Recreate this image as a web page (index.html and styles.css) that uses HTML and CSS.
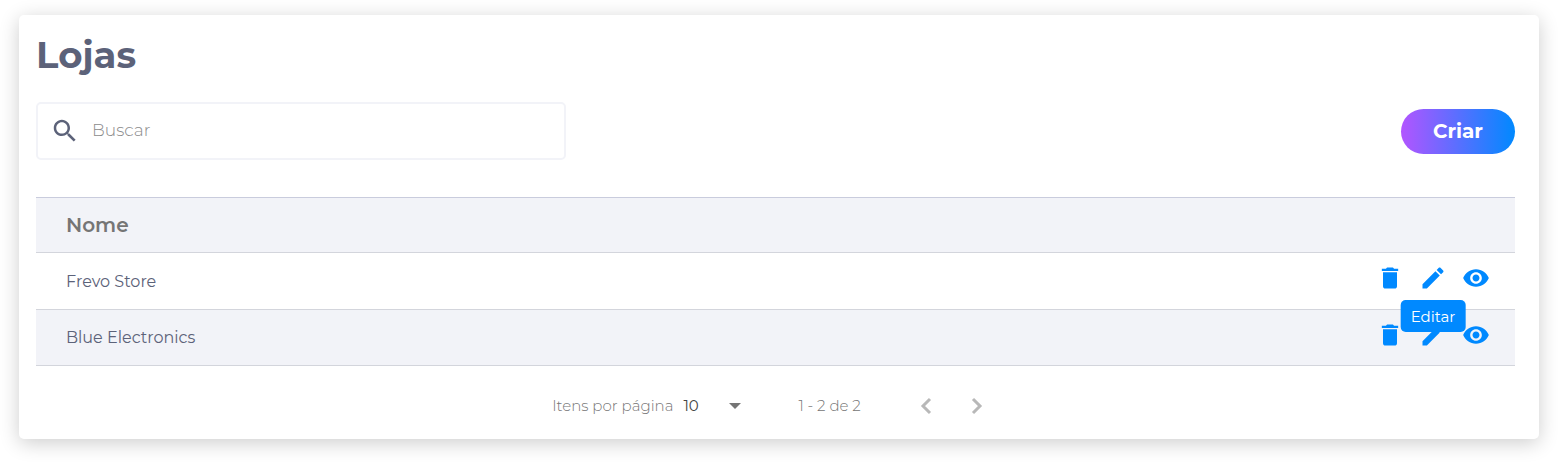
FILE: index.html
```html
<!DOCTYPE html>
<html lang="pt-BR">
<head>
<meta charset="utf-8">
<meta name="viewport" content="width=device-width, initial-scale=1">
<title>Lojas</title>
<link rel="stylesheet" href="styles.css">
</head>
<body>
<svg class="sprite" aria-hidden="true">
  <symbol id="trash" viewBox="0 0 24 24"><path d="M6 19c0 1.100.9 2 2 2h8c1.100 0 2-.9 2-2V7H6v12zM19 4h-3.500l-1-1h-5l-1 1H5v2h14V4z"/></symbol>
  <symbol id="pencil" viewBox="0 0 24 24"><path d="M3 17.250V21h3.750L17.810 9.940l-3.750-3.750L3 17.250zM20.710 7.040c.39-.39.39-1.020 0-1.410l-2.340-2.340c-.39-.39-1.020-.39-1.410 0l-1.830 1.830 3.750 3.750 1.830-1.830z"/></symbol>
  <symbol id="eye" viewBox="0 0 24 24"><path d="M12 4.500C7 4.500 2.730 7.610 1 12c1.730 4.390 6 7.500 11 7.500s9.270-3.110 11-7.500c-1.730-4.390-6-7.500-11-7.500zM12 17c-2.760 0-5-2.240-5-5s2.240-5 5-5 5 2.240 5 5-2.240 5-5 5zm0-8c-1.660 0-3 1.340-3 3s1.340 3 3 3 3-1.340 3-3-1.340-3-3-3z"/></symbol>
</svg>
<main class="card">
  <h1 class="title">Lojas</h1>
  <div class="toolbar">
    <label class="search">
      <svg class="search-icon" viewBox="0 0 24 24" aria-hidden="true"><path d="M15.500 14h-.79l-.28-.27C15.410 12.590 16 11.110 16 9.500 16 5.910 13.090 3 9.500 3S3 5.910 3 9.500 5.910 16 9.500 16c1.610 0 3.090-.59 4.230-1.570l.27.28v.79l5 4.990L20.490 19l-4.990-5zm-6 0C7.010 14 5 11.990 5 9.500S7.010 5 9.500 5 14 7.010 14 9.500 11.990 14 9.500 14z"/></svg>
      <input class="search-input" type="text" placeholder="Buscar" aria-label="Buscar">
    </label>
    <button class="create" type="button">Criar</button>
  </div>
  <table class="table">
    <thead>
      <tr><th class="cell head" scope="col">Nome</th><td class="cell head"></td></tr>
    </thead>
    <tbody>
      <tr class="row">
        <td class="cell">Frevo Store</td>
        <td class="cell">
          <div class="actions">
            <button class="action" type="button" aria-label="Excluir"><svg class="icon"><use href="#trash"/></svg></button>
            <button class="action" type="button" aria-describedby="tip" aria-label="Editar"><svg class="icon"><use href="#pencil"/></svg><span class="tooltip" id="tip" role="tooltip">Editar</span></button>
            <button class="action" type="button" aria-label="Visualizar"><svg class="icon"><use href="#eye"/></svg></button>
          </div>
        </td>
      </tr>
      <tr class="row">
        <td class="cell">Blue Electronics</td>
        <td class="cell">
          <div class="actions">
            <button class="action" type="button" aria-label="Excluir"><svg class="icon"><use href="#trash"/></svg></button>
            <button class="action" type="button" aria-label="Editar"><svg class="icon"><use href="#pencil"/></svg></button>
            <button class="action" type="button" aria-label="Visualizar"><svg class="icon"><use href="#eye"/></svg></button>
          </div>
        </td>
      </tr>
    </tbody>
  </table>
  <nav class="pager" aria-label="Paginação">
    <label class="pager-label" for="size">Itens por página</label>
    <span class="size">
      <select class="size-select" id="size"><option>10</option><option>25</option></select>
      <svg class="caret" viewBox="0 0 12 6" aria-hidden="true"><path d="M0 0h12L6 6z"/></svg>
    </span>
    <span class="range">1 - 2 de 2</span>
    <button class="step" type="button" disabled aria-label="Página anterior"><svg class="chevron" viewBox="0 0 12 18"><path d="M10 2L3 9l7 7"/></svg></button>
    <button class="step" type="button" disabled aria-label="Próxima página"><svg class="chevron" viewBox="0 0 12 18"><path d="M2 2l7 7-7 7"/></svg></button>
  </nav>
</main>
</body>
</html>
```
FILE: styles.css
```css
* { box-sizing: border-box; }

body {
  margin: 0;
  background: #fff;
  color: #5c6279;
  font-family: Montserrat, Inter, "Open Sans", sans-serif;
}

button, input, select { font: inherit; }

button {
  padding: 0;
  border: 0;
  background: none;
}

.sprite { display: none; }

.card {
  margin: 15px 19px 23px;
  padding: 16px 24px 13px 17px;
  border-radius: 5px;
  background: #fff;
  box-shadow: 0 4px 20px rgba(0, 0, 0, 0.2);
}

.title {
  margin: 0 0 23px;
  font-size: 37px;
  line-height: 48px;
  font-weight: 700;
}

.toolbar {
  display: flex;
  align-items: center;
  justify-content: space-between;
  gap: 24px;
  margin-bottom: 37px;
}

.search {
  display: flex;
  flex: 0 1 530px;
  align-items: center;
  gap: 12px;
  height: 58px;
  padding: 0 12px;
  border: 2px solid #f2f3f8;
  border-radius: 5px;
}

.search-icon {
  flex: none;
  width: 30px;
  height: 30px;
  fill: #5c6279;
}

.search-input {
  flex: 1;
  min-width: 0;
  padding: 0 0 2px;
  border: 0;
  outline: 0;
  background: none;
  color: #5c6279;
  font-size: 17px;
}

.search-input::placeholder {
  color: #8c8c8c;
  font-weight: 300;
}

.create {
  padding: 0 32px;
  border-radius: 23px;
  background: linear-gradient(90deg, #b255ff, #0089ff);
  color: #fff;
  font-size: 20px;
  line-height: 45px;
  font-weight: 700;
}

.table {
  width: 100%;
  border-collapse: separate;
  border-spacing: 0;
  border-top: 1px solid #c9ccdd;
}

.cell {
  height: 57px;
  padding: 0 25px 0 30px;
  border-bottom: 1px solid #d3d5dc;
  font-size: 16px;
  text-align: left;
}

.head {
  height: 55px;
  background: #f2f3f8;
  color: #757575;
  font-size: 20px;
  font-weight: 600;
}

.row:nth-child(even) { background: #f2f3f8; }

.row:last-child .cell { height: 56px; }

.actions {
  display: flex;
  justify-content: flex-end;
  gap: 15px;
  padding-bottom: 6px;
}

.action {
  position: relative;
  display: flex;
  color: #0089ff;
}

.icon {
  width: 28px;
  height: 28px;
  fill: currentColor;
}

.tooltip {
  position: absolute;
  z-index: 1;
  top: 36px;
  left: 50%;
  transform: translateX(-50%);
  padding: 1px 10px 0;
  border-radius: 5px;
  background: #0089ff;
  color: #fff;
  font-size: 15px;
  line-height: 31px;
}

.pager {
  display: flex;
  align-items: center;
  justify-content: center;
  padding: 20px 0 0 4px;
  color: #757575;
  font-size: 15px;
  font-weight: 300;
  line-height: 40px;
}

.pager-label { margin-right: 10px; }

.size {
  display: flex;
  align-items: center;
  width: 58px;
  margin-right: 57px;
}

.size-select {
  flex: 1;
  min-width: 0;
  margin-right: -12px;
  padding: 0;
  border: 0;
  appearance: none;
  background: none;
  color: #444;
  font-weight: 400;
}

.caret {
  flex: none;
  width: 12px;
  height: 6px;
  fill: #757575;
  pointer-events: none;
}

.range { margin-right: 40px; }

.step {
  display: flex;
  justify-content: center;
  width: 51px;
}

.chevron {
  width: 12px;
  height: 18px;
  fill: none;
  stroke: #b8b8b8;
  stroke-width: 3;
}
```
